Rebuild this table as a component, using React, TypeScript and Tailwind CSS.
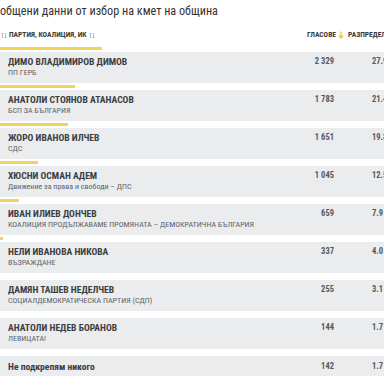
import React from "react";

const rows = [
  { name: "ДИМО ВЛАДИМИРОВ ДИМОВ", party: "ПП ГЕРБ", votes: "2 329", pct: "27.9", bar: 102 },
  { name: "АНАТОЛИ СТОЯНОВ АТАНАСОВ", party: "БСП ЗА БЪЛГАРИЯ", votes: "1 783", pct: "21.4", bar: 75 },
  { name: "ЖОРО ИВАНОВ ИЛЧЕВ", party: "СДС", votes: "1 651", pct: "19.8", bar: 68 },
  { name: "ХЮСНИ ОСМАН АДЕМ", party: "Движение за права и свободи – ДПС", votes: "1 045", pct: "12.5", bar: 38 },
  { name: "ИВАН ИЛИЕВ ДОНЧЕВ", party: "КОАЛИЦИЯ ПРОДЪЛЖАВАМЕ ПРОМЯНАТА – ДЕМОКРАТИЧНА БЪЛГАРИЯ", votes: "659", pct: "7.9", bar: 19 },
  { name: "НЕЛИ ИВАНОВА НИКОВА", party: "ВЪЗРАЖДАНЕ", votes: "337", pct: "4.0", bar: 3 },
  { name: "ДАМЯН ТАШЕВ НЕДЕЛЧЕВ", party: "СОЦИАЛДЕМОКРАТИЧЕСКА ПАРТИЯ (СДП)", votes: "255", pct: "3.1", bar: 0 },
  { name: "АНАТОЛИ НЕДЕВ БОРАНОВ", party: "ЛЕВИЦАТА!", votes: "144", pct: "1.7", bar: 0 },
  { name: "Не подкрепям никого", party: null as string | null, votes: "142", pct: "1.7", bar: 0 },
];

const cond = { fontFamily: '"Liberation Sans Narrow", "Roboto Condensed", "DejaVu Sans Condensed", Roboto, sans-serif' };

function SortIcon({ color = "#a0a4a8" }: { color?: string }) {
  return (
    <svg width="6" height="7" viewBox="0 0 6 7" className="inline-block">
      <path d="M1.5 6V1M0.5 2L1.5 1L2.5 2M4.5 1V6M3.5 5L4.5 6L5.5 5" stroke={color} strokeWidth="0.8" fill="none" />
    </svg>
  );
}

function DownIcon() {
  return (
    <svg width="6" height="8" viewBox="0 0 6 8" className="inline-block">
      <path d="M3 0.5V6.5M0.8 4.5L3 7L5.2 4.5" stroke="#f0c93a" strokeWidth="1.4" fill="none" />
    </svg>
  );
}

export default function App() {
  return (
    <div className="w-[384px] h-[384px] overflow-hidden bg-white" style={cond}>
      <div className="w-[430px]">
        <div className="h-[22px] pt-[3px] text-[12.2px] leading-[16px] text-[#333] whitespace-nowrap">
          общени данни от избор на кмет на община
        </div>
        <div className="h-[25px] pt-[1px] flex items-center text-[7.5px] font-bold text-[#3a3a3a] uppercase whitespace-nowrap">
          <div className="w-[307px] flex items-center gap-[2px] pl-[1px]">
            <SortIcon />
            <span>ПАРТИЯ, КОАЛИЦИЯ, ИК</span>
            <SortIcon />
          </div>
          <div className="flex items-center gap-[2px]">
            <span>ГЛАСОВЕ</span>
            <DownIcon />
            <span className="ml-[2px]">РАЗПРЕДЕЛЕНИЕ</span>
          </div>
        </div>
        {rows.map((r, i) => (
          <div key={i}>
            <div className="h-[3px] bg-[#f3d35a]" style={{ width: r.bar }} />
            <div className="h-[2px]" />
            <div className={`flex bg-[#eaecee] ${r.party ? "h-[31px] pt-[4px]" : "h-[20px] items-center"}`}>
              <div className="w-[300px] pl-[8px] whitespace-nowrap">
                <div className="text-[9.6px] leading-[11px] font-bold text-[#3b3e42]">{r.name}</div>
                {r.party && <div className="text-[8px] leading-[11px] text-[#5f6368]">{r.party}</div>}
              </div>
              <div className="w-[34px] text-right text-[8.5px] leading-[11px] font-bold text-[#555a5f] whitespace-nowrap">{r.votes}</div>
              <div className="pl-[38px] text-[8.5px] leading-[11px] font-bold text-[#555a5f] whitespace-nowrap">{r.pct} %</div>
            </div>
            <div className="h-[2px]" />
          </div>
        ))}
      </div>
    </div>
  );
}
